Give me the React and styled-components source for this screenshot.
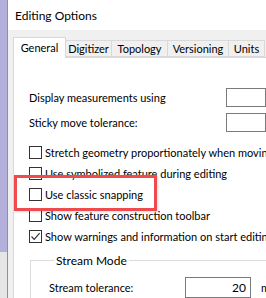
import styled, { createGlobalStyle } from 'styled-components';

const GlobalStyle = createGlobalStyle`
  body {
    margin: 0;
    font-family: Lato, 'Segoe UI', sans-serif;
    font-size: 11px;
    color: #000;
  }
`;

const Screen = styled.div`
  position: relative;
  width: 266px;
  height: 298px;
  overflow: hidden;
  display: flex;
`;

const BackWindow = styled.div`
  width: 7px;
  flex-shrink: 0;
  display: flex;
  flex-direction: column;
  background: #e6e6e6;

  &::before {
    content: '';
    height: 252px;
    background: #b3b0dc;
  }
`;

const Dialog = styled.div`
  flex: 1;
  display: flex;
  flex-direction: column;
  border-left: 1px solid #8e8ea8;
  min-width: 0;
`;

const TitleBar = styled.div`
  height: 30px;
  flex-shrink: 0;
  background: #fff;
  display: flex;
  align-items: center;
  padding-left: 7px;
  font-size: 12px;
  white-space: nowrap;
`;

const Body = styled.div`
  flex: 1 0 auto;
  background: #f0f0f0;
  padding: 7px 0 0 5px;
  display: flex;
  flex-direction: column;
`;

const TabRow = styled.div`
  display: flex;
  align-items: flex-end;
  height: 20px;
  flex-shrink: 0;
  position: relative;
  z-index: 1;
`;

const Tab = styled.div`
  flex-shrink: 0;
  box-sizing: border-box;
  width: ${(p) => p.w}px;
  height: ${(p) => (p.active ? 21 : 17)}px;
  margin-bottom: ${(p) => (p.active ? -1 : 0)}px;
  background: ${(p) => (p.active ? '#fff' : '#f0f0f0')};
  border: 1px solid #d9d9d9;
  border-bottom: ${(p) => (p.active ? 'none' : '1px solid #d9d9d9')};
  border-left: ${(p) => (p.first || p.active ? '1px solid #d9d9d9' : 'none')};
  display: flex;
  align-items: ${(p) => (p.active ? 'flex-start' : 'center')};
  padding-top: ${(p) => (p.active ? 3 : 0)}px;
  justify-content: center;
  white-space: nowrap;
`;

const Panel = styled.div`
  flex: 1 0 auto;
  background: #fff;
  border: 1px solid #d9d9d9;
  border-right: none;
  border-bottom: none;
  padding: 30px 0 0 15px;
  display: flex;
  flex-direction: column;
`;

const FieldRow = styled.div`
  display: flex;
  align-items: center;
  justify-content: space-between;
  height: 19px;
  flex-shrink: 0;
  margin-bottom: ${(p) => p.gap || 0}px;
  white-space: nowrap;
`;

const TextBox = styled.div`
  box-sizing: border-box;
  width: ${(p) => p.w}px;
  height: ${(p) => p.h || 19}px;
  border: 1px solid #7a7a7a;
  background: #fff;
  display: flex;
  align-items: center;
  justify-content: flex-end;
  padding-right: 4px;
  font-size: 12px;
  flex-shrink: 0;
`;

const CheckList = styled.div`
  display: flex;
  flex-direction: column;
  flex-shrink: 0;
  margin-top: 10px;
`;

const CheckRow = styled.div`
  display: flex;
  align-items: center;
  gap: 3px;
  height: 21px;
  flex-shrink: 0;
  white-space: nowrap;
`;

const Box = styled.span`
  box-sizing: border-box;
  width: 13px;
  height: 13px;
  border: 1px solid #333;
  background: #fff;
  flex-shrink: 0;
  display: flex;
  align-items: center;
  justify-content: center;
`;

const Group = styled.fieldset`
  margin: 6px 0 0 1px;
  padding: 9px 0 0 18px;
  border: 1px solid #dcdcdc;
  border-right: none;
  border-bottom: none;
  min-width: 0;
  flex-shrink: 0;

  legend {
    padding: 0 2px;
    margin-left: 5px;
    font-size: 12px;
  }
`;

const ToleranceRow = styled.div`
  display: flex;
  align-items: center;
  white-space: nowrap;
`;

const ToleranceLabel = styled.span`
  width: 136px;
  flex-shrink: 0;
`;

const Unit = styled.span`
  margin-left: 10px;
`;

const Highlight = styled.div`
  position: absolute;
  left: 14px;
  top: 175px;
  width: 143px;
  height: 36px;
  box-sizing: border-box;
  border: 3px solid #ef4b4e;
  box-shadow: 1px 1px 2px rgba(0, 0, 0, 0.15);
`;

function Check({ checked, children }) {
  return (
    <CheckRow>
      <Box>
        {checked && (
          <svg width="11" height="11" viewBox="0 0 11 11">
            <path d="M1.5 5.5 L4.2 8.3 L9.6 2.2" fill="none" stroke="#333" strokeWidth="1.2" />
          </svg>
        )}
      </Box>
      <span>{children}</span>
    </CheckRow>
  );
}

const tabs = [
  { label: 'General', w: 53, active: true },
  { label: 'Digitizer', w: 46 },
  { label: 'Topology', w: 56 },
  { label: 'Versioning', w: 61 },
  { label: 'Units', w: 36 },
];

export default function App() {
  return (
    <>
      <GlobalStyle />
      <Screen>
        <BackWindow />
        <Dialog>
          <TitleBar>Editing Options</TitleBar>
          <Body>
            <TabRow>
              {tabs.map((t, i) => (
                <Tab key={t.label} w={t.w} active={t.active} first={i === 0}>
                  {t.label}
                </Tab>
              ))}
            </TabRow>
            <Panel>
              <FieldRow gap={6}>
                <span>Display measurements using</span>
                <TextBox w={40} />
              </FieldRow>
              <FieldRow>
                <span>Sticky move tolerance:</span>
                <TextBox w={40} />
              </FieldRow>
              <CheckList>
                <Check>Stretch geometry proportionately when moving a vertex</Check>
                <Check>Use symbolized feature during editing</Check>
                <Check>Use classic snapping</Check>
                <Check>Show feature construction toolbar</Check>
                <Check checked>Show warnings and information on start editing</Check>
              </CheckList>
              <Group>
                <legend>Stream Mode</legend>
                <ToleranceRow>
                  <ToleranceLabel>Stream tolerance:</ToleranceLabel>
                  <TextBox w={66} h={21}>20</TextBox>
                  <Unit>map units</Unit>
                </ToleranceRow>
              </Group>
            </Panel>
          </Body>
        </Dialog>
        <Highlight />
      </Screen>
    </>
  );
}
